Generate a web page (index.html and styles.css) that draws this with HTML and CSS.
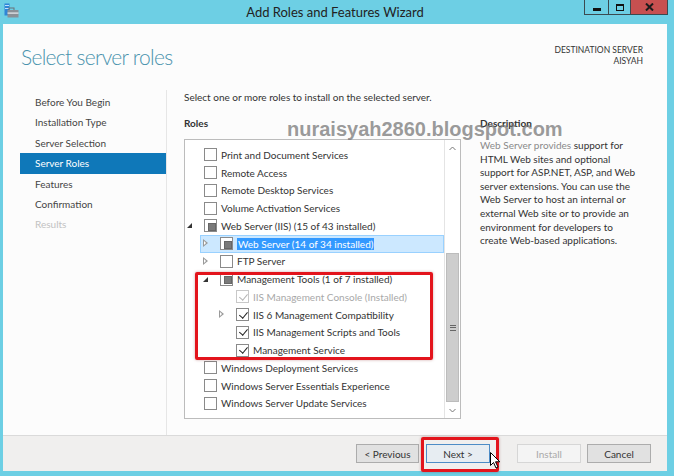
FILE: index.html
```html
<!DOCTYPE html>
<html>
<head>
    <title>Add Roles and Features Wizard</title>
    <link rel="stylesheet" href="styles.css">
</head>
<body>
<div class="window">
    <div class="titlebar">
        <div class="app-icon">
            <svg width="15" height="15" viewBox="0 0 15 15">
                <rect x="0.5" y="0.5" width="5" height="12" fill="#2f86d6"/>
                <rect x="1" y="2" width="4" height="1" fill="#bfe0ff"/>
                <rect x="1" y="5" width="4" height="1" fill="#bfe0ff"/>
                <rect x="5" y="5" width="5" height="2.5" fill="none" stroke="#6b7177" stroke-width="1"/>
                <rect x="3.5" y="7" width="11" height="7.5" fill="#8a9096"/>
                <rect x="3.5" y="9.5" width="11" height="1.2" fill="#e8ecef"/>
            </svg>
        </div>
        <div class="window-title">Add Roles and Features Wizard</div>
        <div class="caption-buttons">
            <div class="cap-btn cap-min"><span></span></div>
            <div class="cap-btn cap-max"><span></span></div>
            <div class="cap-btn cap-close">
                <svg width="9" height="8" viewBox="0 0 9 8">
                    <path d="M1 0.5 L8 7.5 M8 0.5 L1 7.5" stroke="#1b1b1b" stroke-width="2"/>
                </svg>
            </div>
        </div>
    </div>

    <div class="content">
        <div class="page-head">
            <h1 class="page-title">Select server roles</h1>
            <div class="dest">
                <div>DESTINATION SERVER</div>
                <div>AISYAH</div>
            </div>
        </div>

        <div class="page-body">
            <ul class="nav">
                <li class="nav-item">Before You Begin</li>
                <li class="nav-item">Installation Type</li>
                <li class="nav-item">Server Selection</li>
                <li class="nav-item active">Server Roles</li>
                <li class="nav-item">Features</li>
                <li class="nav-item">Confirmation</li>
                <li class="nav-item disabled">Results</li>
            </ul>

            <div class="main">
                <p class="intro">Select one or more roles to install on the selected server.</p>
                <div class="panes">
                    <div class="roles-pane">
                        <div class="pane-label">Roles</div>
                        <div class="list">
                            <div class="tree">
                                <div class="row"><span class="twisty"></span><span class="cb"></span><span class="label">Print and Document Services</span></div>
                                <div class="row"><span class="twisty"></span><span class="cb"></span><span class="label">Remote Access</span></div>
                                <div class="row"><span class="twisty"></span><span class="cb"></span><span class="label">Remote Desktop Services</span></div>
                                <div class="row"><span class="twisty"></span><span class="cb"></span><span class="label">Volume Activation Services</span></div>
                                <div class="row"><span class="twisty open"></span><span class="cb mixed"></span><span class="label">Web Server (IIS) (15 of 43 installed)</span></div>
                                <div class="row l1 selected"><span class="twisty closed"></span><span class="cb mixed"></span><span class="label"><span class="sel-text">Web Server (14 of 34 installed)</span></span></div>
                                <div class="row l1"><span class="twisty closed"></span><span class="cb"></span><span class="label">FTP Server</span></div>
                                <div class="row l1"><span class="twisty open"></span><span class="cb mixed"></span><span class="label">Management Tools (1 of 7 installed)</span></div>
                                <div class="row l2 dim"><span class="twisty"></span><span class="cb checked"></span><span class="label">IIS Management Console (Installed)</span></div>
                                <div class="row l2"><span class="twisty closed"></span><span class="cb checked"></span><span class="label">IIS 6 Management Compatibility</span></div>
                                <div class="row l2"><span class="twisty"></span><span class="cb checked"></span><span class="label">IIS Management Scripts and Tools</span></div>
                                <div class="row l2"><span class="twisty"></span><span class="cb checked"></span><span class="label">Management Service</span></div>
                                <div class="row"><span class="twisty"></span><span class="cb"></span><span class="label">Windows Deployment Services</span></div>
                                <div class="row"><span class="twisty"></span><span class="cb"></span><span class="label">Windows Server Essentials Experience</span></div>
                                <div class="row"><span class="twisty"></span><span class="cb"></span><span class="label">Windows Server Update Services</span></div>
                            </div>
                            <div class="scrollbar">
                                <div class="sb-arrow">
                                    <svg width="7" height="5" viewBox="0 0 7 5"><path d="M0.5 4 L3.5 1 L6.5 4" fill="none" stroke="#777" stroke-width="1"/></svg>
                                </div>
                                <div class="sb-track"></div>
                                <div class="sb-thumb"><span class="grip"></span></div>
                                <div class="sb-arrow">
                                    <svg width="7" height="5" viewBox="0 0 7 5"><path d="M0.5 1 L3.5 4 L6.5 1" fill="none" stroke="#777" stroke-width="1"/></svg>
                                </div>
                            </div>
                            <div class="mark mark-tools"></div>
                        </div>
                    </div>

                    <div class="desc-pane">
                        <div class="pane-label">Description</div>
                        <p class="desc"><span class="desc-lead">Web Server provides</span> support for<br>HTML Web sites and optional<br>support for ASP.NET, ASP, and Web<br>server extensions. You can use the<br>Web Server to host an internal or<br>external Web site or to provide an<br>environment for developers to<br>create Web-based applications.</p>
                    </div>
                </div>
            </div>
        </div>

        <div class="footer">
            <button class="btn btn-prev">&lt; Previous</button>
            <button class="btn btn-next">Next &gt;</button>
            <button class="btn btn-install" disabled>Install</button>
            <button class="btn">Cancel</button>
            <div class="mark mark-next"></div>
            <svg class="cursor" width="11" height="17" viewBox="0 0 11 17">
                <path d="M0.5 0.5 L0.5 13.5 L3.5 10.5 L6 16 L8 15 L5.5 9.8 L9.8 9.8 Z" fill="#fff" stroke="#000" stroke-width="1"/>
            </svg>
        </div>
    </div>

    <div class="watermark">nuraisyah2860.blogspot.com</div>
</div>
</body>
</html>
```

FILE: styles.css
```css
* {
    box-sizing: border-box;
}

body {
    margin: 0;
    padding: 0;
    width: 674px;
    height: 476px;
    overflow: hidden;
    background-color: #6dcfe4;
    font-family: Lato, "Open Sans", sans-serif;
    font-size: 10px;
    color: #333;
}

.window {
    position: relative;
    display: flex;
    flex-direction: column;
    height: 476px;
    padding: 0 7px 5px 3px;
}

/* title bar */

.titlebar {
    height: 24px;
    display: grid;
    grid-template-columns: 1fr auto 1fr;
    align-items: start;
}

.app-icon {
    padding: 3px 0 0 1px;
}

.window-title {
    padding-top: 4px;
    font-size: 13px;
    color: #222;
}

.caption-buttons {
    justify-self: end;
    display: flex;
    margin-right: -1px;
}

.cap-btn {
    height: 15px;
    border: 1px solid #3b4a50;
    border-top: none;
    display: flex;
    align-items: center;
    justify-content: center;
}

.cap-min,
.cap-max {
    width: 24px;
    border-right: none;
}

.cap-max {
    width: 22px;
}

.cap-min span {
    width: 8px;
    height: 3px;
    margin-top: 4px;
    background-color: #111;
}

.cap-max span {
    width: 8px;
    height: 7px;
    border: 1px solid #111;
    border-top-width: 2px;
}

.cap-close {
    width: 38px;
    background-color: #c75050;
}

/* content */

.content {
    flex: 1;
    display: flex;
    flex-direction: column;
    background-color: #fcfcfc;
}

.page-head {
    height: 66px;
    display: flex;
    justify-content: space-between;
    padding: 20px 24px 0 18px;
}

.page-title {
    margin: 0;
    font-size: 21px;
    line-height: 26px;
    font-weight: 300;
    letter-spacing: -0.7px;
    color: #4a93ad;
}

.dest {
    margin-top: 1px;
    font-size: 8.5px;
    line-height: 11px;
    text-align: right;
    color: #333;
}

.page-body {
    flex: 1;
    display: flex;
}

.nav {
    list-style: none;
    margin: 0 0 0 17px;
    padding: 2px 0 0 0;
    width: 147px;
    border-right: 1px solid #e6e6e6;
}

.nav-item {
    height: 20.4px;
    line-height: 20.4px;
    padding-left: 15px;
    color: #444;
}

.nav-item.active {
    background-color: #0f78b9;
    color: #fff;
}

.nav-item.disabled {
    color: #c2c2c2;
}

.main {
    flex: 1;
    padding-left: 17px;
}

.intro {
    margin: 0;
    line-height: 14px;
}

.panes {
    display: flex;
    margin-top: 12px;
}

.pane-label {
    font-weight: bold;
    line-height: 14px;
    margin-bottom: 9px;
}

/* roles list */

.list {
    position: relative;
    width: 277px;
    height: 280px;
    display: flex;
    border: 1px solid #bcbcbc;
    background-color: #fff;
}

.tree {
    flex: 1;
    padding-top: 6px;
}

.row {
    height: 17.75px;
    display: flex;
    align-items: center;
    white-space: nowrap;
}

.row.l1 {
    padding-left: 16px;
}

.row.l2 {
    padding-left: 32px;
}

.row.selected {
    margin-left: 15px;
    padding-left: 0;
    background-color: #cce8ff;
    border: 1px solid #99d1ff;
}

.twisty {
    width: 16px;
    height: 9px;
    position: relative;
    flex-shrink: 0;
}

.twisty.open::before {
    content: "";
    position: absolute;
    left: 2px;
    top: 2px;
    border-style: solid;
    border-width: 0 0 5px 5px;
    border-color: transparent transparent #333 transparent;
}

.twisty.closed::before {
    content: "";
    position: absolute;
    left: 2px;
    top: 0;
    border-style: solid;
    border-width: 4.5px 0 4.5px 5px;
    border-color: transparent transparent transparent #9a9a9a;
}

.twisty.closed::after {
    content: "";
    position: absolute;
    left: 3px;
    top: 2px;
    border-style: solid;
    border-width: 2.5px 0 2.5px 2.8px;
    border-color: transparent transparent transparent #fff;
}

.cb {
    width: 13px;
    height: 13px;
    margin: 0 4px 0 3px;
    flex-shrink: 0;
    border: 1px solid #8a8a8a;
    background-color: #fff;
    position: relative;
}

.cb.mixed::after {
    content: "";
    position: absolute;
    left: 2.5px;
    top: 2.5px;
    width: 6px;
    height: 6px;
    background-color: #7a7a7a;
    border: 1px solid #666;
}

.cb.checked::after {
    content: "";
    position: absolute;
    left: 3.5px;
    top: 0.5px;
    width: 3.5px;
    height: 7px;
    border: solid #222;
    border-width: 0 1.6px 1.6px 0;
    transform: rotate(40deg);
}

.row.dim {
    color: #a8a8a8;
}

.row.dim .cb {
    border-color: #c8c8c8;
}

.row.dim .cb::after {
    border-color: #b4b4b4;
}

.sel-text {
    background-color: #3399ff;
    color: #fff;
    padding: 0 1px;
}

.scrollbar {
    width: 16px;
    display: flex;
    flex-direction: column;
    border-left: 1px solid #e4e4e4;
    background-color: #fff;
}

.sb-arrow {
    height: 16px;
    display: flex;
    align-items: center;
    justify-content: center;
}

.sb-track {
    height: 97px;
}

.sb-thumb {
    flex: 1;
    margin: 0 1px;
    background-color: #cdcdcd;
    border: 1px solid #bcbcbc;
    display: flex;
    align-items: center;
    justify-content: center;
}

.grip {
    width: 6px;
    height: 6px;
    border-top: 1px solid #666;
    border-bottom: 1px solid #666;
    background: linear-gradient(#666, #666) center / 6px 1px no-repeat;
}

/* description */

.desc-pane {
    margin-left: 19px;
    width: 168px;
}

.desc {
    margin: 0;
    line-height: 13.6px;
    white-space: nowrap;
}

.desc-lead {
    color: #8a8a8a;
}

/* footer */

.footer {
    position: relative;
    height: 36px;
    display: flex;
    justify-content: flex-end;
    align-items: flex-start;
    padding: 8px 16px 0 0;
    border-top: 1px solid #dadada;
    background-color: #f0efee;
}

.btn {
    width: 64px;
    height: 19px;
    margin-left: 6px;
    padding: 0;
    border: 1px solid #acacac;
    background-color: #e1e1e1;
    font-family: inherit;
    font-size: 10px;
    color: #333;
}

.btn-prev {
    width: 63px;
}

.btn-next {
    margin-left: 7px;
    border-color: #4d8cc6;
    background-color: #e7edf2;
}

.btn-install {
    margin-left: 27px;
    border-color: #d6d6d6;
    background-color: #f4f4f4;
    color: #a9a9a9;
}

/* annotations drawn over the screenshot */

.mark {
    position: absolute;
    border: 3px solid #e3141c;
    border-radius: 2px;
    box-shadow: 0 0 3px rgba(120, 0, 0, 0.35);
}

.mark-tools {
    left: 10px;
    top: 132px;
    width: 238px;
    height: 88px;
}

.mark-next {
    left: 418px;
    top: 1px;
    width: 78px;
    height: 35px;
}

.cursor {
    position: absolute;
    left: 487px;
    top: 16px;
}

.watermark {
    position: absolute;
    left: 287px;
    top: 119px;
    font-family: "Liberation Sans", Arial, sans-serif;
    font-weight: bold;
    font-size: 20px;
    line-height: 20px;
    color: rgba(110, 110, 110, 0.7);
    white-space: nowrap;
}
```
